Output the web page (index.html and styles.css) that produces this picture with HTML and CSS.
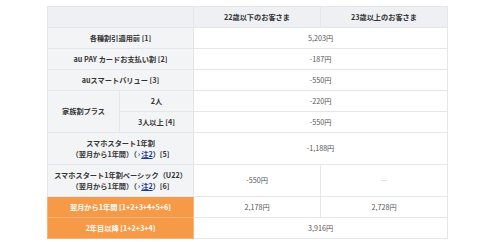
FILE: index.html
```html
<!DOCTYPE html>
<html lang="ja">
<head>
<meta charset="utf-8">
<link rel="stylesheet" href="styles.css">
</head>
<body>
<table class="price">
  <colgroup>
    <col class="c-a"><col class="c-b"><col class="c-v"><col class="c-v">
  </colgroup>
  <thead>
    <tr><th colspan="2" class="corner"></th><th>22歳以下のお客さま</th><th>23歳以上のお客さま</th></tr>
  </thead>
  <tbody>
    <tr><th colspan="2">各種割引適用前 [1]</th><td colspan="2">5,203円</td></tr>
    <tr><th colspan="2">au PAY カードお支払い割 [2]</th><td colspan="2">-187円</td></tr>
    <tr><th colspan="2">auスマートバリュー [3]</th><td colspan="2">-550円</td></tr>
    <tr><th rowspan="2">家族割プラス</th><th>2人</th><td colspan="2">-220円</td></tr>
    <tr><th>3人以上 [4]</th><td colspan="2">-550円</td></tr>
    <tr><th colspan="2">スマホスタート1年割<br>（翌月から1年間）（<span class="arr">›</span><a href="#">注2</a>）[5]</th><td colspan="2">-1,188円</td></tr>
    <tr><th colspan="2">スマホスタート1年割ベーシック（U22）<br>（翌月から1年間）（<span class="arr">›</span><a href="#">注2</a>）[6]</th><td>-550円</td><td class="dash">—</td></tr>
    <tr class="total"><th colspan="2">翌月から1年間 [1+2+3+4+5+6]</th><td>2,178円</td><td>2,728円</td></tr>
    <tr class="total"><th colspan="2">2年目以降 [1+2+3+4]</th><td colspan="2">3,916円</td></tr>
  </tbody>
</table>
</body>
</html>
```
FILE: styles.css
```css
html, body {
  margin: 0;
  padding: 0;
  background: #ffffff;
}
body {
  padding: 6px 0 0 47px;
  font-family: "Noto Sans CJK JP", "Noto Sans", sans-serif;
  font-size: 7.2px;
  color: #333333;
}
.price {
  border-collapse: collapse;
  table-layout: fixed;
  width: 401px;
}
.c-a { width: 72px; }
.c-b { width: 74px; }
.c-v { width: 127px; }
.price th, .price td {
  border: 1px solid #e4e6ea;
  padding: 4.5px 2px;
  line-height: 11px;
  text-align: center;
  vertical-align: middle;
}
.price thead th {
  background: #eef0f4;
  font-weight: 700;
  color: #333333;
}
.price tbody th {
  background: #f3f4f6;
  font-weight: 700;
  color: #333333;
}
.price td {
  background: #ffffff;
  font-weight: 400;
  color: #555555;
}
.price td.dash {
  color: #cccccc;
}
.arr {
  color: #1a56b8;
  font-weight: 700;
  margin: 0 1px;
}
.price a {
  color: #1a3ca0;
  text-decoration: underline;
}
.price tr.total th {
  background: #f69a47;
  color: #ffffff;
  border-color: #f8b27a;
}
```
